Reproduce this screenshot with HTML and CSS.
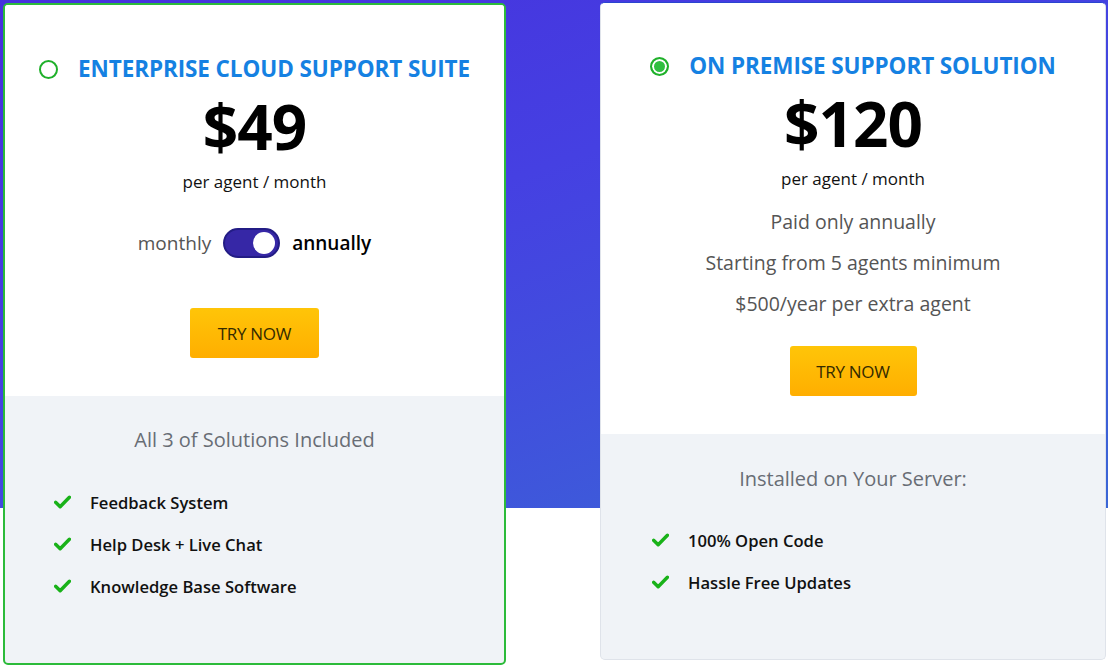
FILE: index.html
```html
<!DOCTYPE html>
<html lang="en">
<head>
    <meta charset="UTF-8">
    <meta name="viewport" content="width=device-width, initial-scale=1.0">
    <title>Pricing</title>
    <link rel="stylesheet" href="styles.css">
</head>
<body>
    <div class="pricing">
        <div class="plan plan-cloud">
            <div class="plan-top">
                <h2 class="plan-title"><span class="radio"></span>ENTERPRISE CLOUD SUPPORT SUITE</h2>
                <div class="price">$49</div>
                <p class="per">per agent / month</p>
                <div class="billing">
                    <span class="billing-off">monthly</span>
                    <span class="switch"><span class="knob"></span></span>
                    <span class="billing-on">annually</span>
                </div>
                <button class="btn-try">TRY NOW</button>
            </div>
            <div class="plan-bottom">
                <h3 class="features-title">All 3 of Solutions Included</h3>
                <ul class="features">
                    <li><svg class="check" viewBox="0 0 16 13"><path d="M1.5 6.8 L5.8 11 L14.5 2" /></svg>Feedback System</li>
                    <li><svg class="check" viewBox="0 0 16 13"><path d="M1.5 6.8 L5.8 11 L14.5 2" /></svg>Help Desk + Live Chat</li>
                    <li><svg class="check" viewBox="0 0 16 13"><path d="M1.5 6.8 L5.8 11 L14.5 2" /></svg>Knowledge Base Software</li>
                </ul>
            </div>
        </div>

        <div class="plan plan-premise">
            <div class="plan-top">
                <h2 class="plan-title"><span class="radio radio-on"></span>ON PREMISE SUPPORT SOLUTION</h2>
                <div class="price">$120</div>
                <p class="per">per agent / month</p>
                <ul class="terms">
                    <li>Paid only annually</li>
                    <li>Starting from 5 agents minimum</li>
                    <li>$500/year per extra agent</li>
                </ul>
                <button class="btn-try">TRY NOW</button>
            </div>
            <div class="plan-bottom">
                <h3 class="features-title">Installed on Your Server:</h3>
                <ul class="features">
                    <li><svg class="check" viewBox="0 0 16 13"><path d="M1.5 6.8 L5.8 11 L14.5 2" /></svg>100% Open Code</li>
                    <li><svg class="check" viewBox="0 0 16 13"><path d="M1.5 6.8 L5.8 11 L14.5 2" /></svg>Hassle Free Updates</li>
                </ul>
            </div>
        </div>
    </div>
</body>
</html>
```

FILE: styles.css
```css
* {
    margin: 0;
    padding: 0;
    box-sizing: border-box;
}

body {
    font-family: "Open Sans", "Noto Sans", sans-serif;
    background-color: #fff;
    background-image: linear-gradient(160deg, #4630dd 0%, #4540e2 40%, #3a66d6 100%);
    background-size: 100% 508px;
    background-repeat: no-repeat;
    width: 1108px;
    height: 667px;
    overflow: hidden;
}

.pricing {
    display: flex;
    align-items: flex-start;
    gap: 94px;
    padding: 2px 2px 0 3px;
}

.plan {
    background: #f0f3f7;
    border-radius: 5px;
    overflow: hidden;
    display: flex;
    flex-direction: column;
}

.plan-cloud {
    width: 503px;
    height: 662px;
    margin-top: 1px;
    border: 2px solid #2cbb3a;
}

.plan-premise {
    width: 506px;
    height: 658px;
    border: 1px solid #dfe3ea;
    border-top-color: #2a45d0;
}

.plan-top {
    background: #fff;
    text-align: center;
    padding-top: 49px;
}

.plan-cloud .plan-top {
    height: 391px;
}

.plan-premise .plan-top {
    height: 431px;
    padding-top: 48px;
}

.plan-title {
    display: flex;
    align-items: center;
    justify-content: center;
    gap: 20px;
    color: #1581e2;
    font-size: 22.5px;
    font-weight: 700;
    line-height: 30px;
    letter-spacing: -0.1px;
}

.radio {
    width: 19px;
    height: 19px;
    border: 2px solid #1fb02a;
    border-radius: 50%;
    flex-shrink: 0;
}

.radio-on {
    background: #2fbf3f;
    box-shadow: inset 0 0 0 2px #fff;
}

.price {
    font-size: 62px;
    font-weight: 700;
    line-height: 62px;
    color: #000;
    margin-top: 11px;
    letter-spacing: -1px;
}

.per {
    font-size: 17px;
    line-height: 22px;
    color: #111;
    margin-top: 14px;
}

.billing {
    display: flex;
    align-items: center;
    justify-content: center;
    gap: 12px;
    margin-top: 35px;
    font-size: 19px;
    line-height: 30px;
}

.billing-off {
    color: #555;
}

.billing-on {
    color: #000;
    font-weight: 600;
}

.switch {
    width: 57px;
    height: 30px;
    border-radius: 15px;
    background: #3627a6;
    border: 2px solid #231c85;
    display: flex;
    align-items: center;
    justify-content: flex-end;
    padding-right: 3px;
}

.knob {
    width: 22px;
    height: 22px;
    border-radius: 50%;
    background: #fff;
}

.btn-try {
    display: block;
    margin: 50px auto 0;
    width: 129px;
    height: 50px;
    border: none;
    border-radius: 3px;
    background: linear-gradient(180deg, #ffc508 0%, #ffae00 100%);
    color: #332a00;
    font-family: inherit;
    font-size: 17px;
    letter-spacing: -0.3px;
    cursor: pointer;
}

.plan-premise .btn-try {
    width: 127px;
    margin-top: 22px;
}

.terms {
    list-style: none;
    margin-top: 11px;
    color: #555;
    font-size: 19.5px;
    line-height: 41px;
}

.plan-bottom {
    flex: 1;
    padding-top: 30px;
}

.features-title {
    text-align: center;
    color: #686d75;
    font-size: 20px;
    font-weight: 400;
    line-height: 28px;
}

.plan-premise .features-title {
    padding-top: 1px;
}

.features {
    list-style: none;
    margin-top: 27px;
}

.features li {
    display: flex;
    align-items: center;
    gap: 19px;
    height: 42px;
    font-size: 16.6px;
    font-weight: 600;
    color: #111;
}

.plan-cloud .features {
    padding-left: 49px;
}

.plan-premise .features {
    padding-left: 51px;
    margin-top: 26px;
}

.check {
    width: 17px;
    height: 14px;
    fill: none;
    stroke: #19b219;
    stroke-width: 3.2;
    stroke-linecap: round;
    stroke-linejoin: round;
}
```
